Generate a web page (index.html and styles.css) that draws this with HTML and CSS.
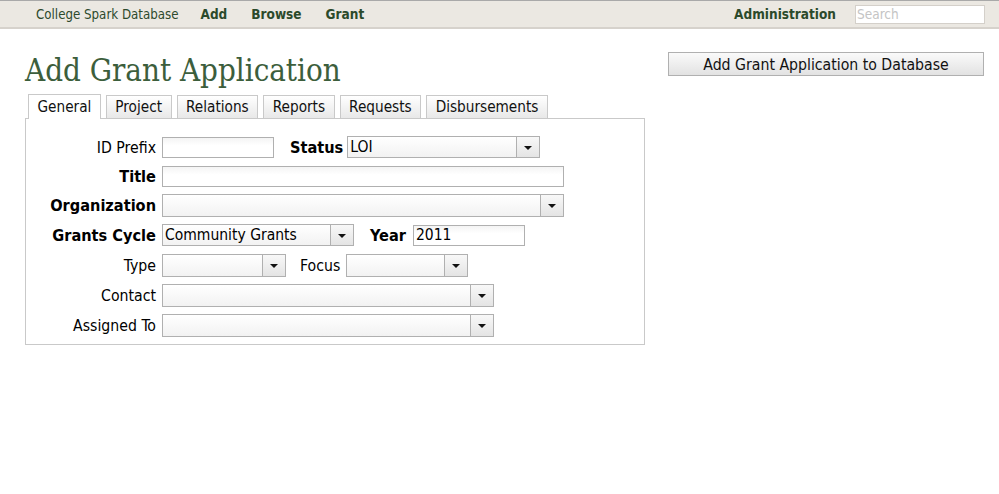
FILE: index.html
```html
<!DOCTYPE html>
<html>
<head>
<meta charset="utf-8">
<link rel="stylesheet" href="styles.css">
</head>
<body>
<div class="topbar">
  <div class="nav-left">
    <span class="brand">College Spark Database</span>
    <a class="nav-link">Add</a>
    <a class="nav-link">Browse</a>
    <a class="nav-link">Grant</a>
  </div>
  <div class="nav-right">
    <a class="nav-link">Administration</a>
    <input class="search" type="text" placeholder="Search">
  </div>
</div>
<div class="main">
  <div class="content">
    <h1 class="title">Add Grant Application</h1>
    <div class="tabs">
      <div class="tab active">General</div>
      <div class="tab">Project</div>
      <div class="tab">Relations</div>
      <div class="tab">Reports</div>
      <div class="tab">Requests</div>
      <div class="tab">Disbursements</div>
    </div>
    <div class="panel">
      <div class="row r1">
        <label class="lbl">ID Prefix</label>
        <div class="input w-idp"></div>
        <label class="lbl2 b s-status">Status</label>
        <div class="select w-status"><span class="val">LOI</span><span class="arrow"></span></div>
      </div>
      <div class="row r2">
        <label class="lbl b">Title</label>
        <div class="input w-title"></div>
      </div>
      <div class="row r3">
        <label class="lbl b">Organization</label>
        <div class="select w-org"><span class="val"></span><span class="arrow"></span></div>
      </div>
      <div class="row r4">
        <label class="lbl b">Grants Cycle</label>
        <div class="select w-cycle"><span class="val">Community Grants</span><span class="arrow"></span></div>
        <label class="lbl2 b s-year">Year</label>
        <div class="input w-year"><span class="val">2011</span></div>
      </div>
      <div class="row r5">
        <label class="lbl">Type</label>
        <div class="select w-type"><span class="val"></span><span class="arrow"></span></div>
        <label class="lbl2 s-focus">Focus</label>
        <div class="select w-focus"><span class="val"></span><span class="arrow"></span></div>
      </div>
      <div class="row r6">
        <label class="lbl">Contact</label>
        <div class="select w-contact"><span class="val"></span><span class="arrow"></span></div>
      </div>
      <div class="row r7">
        <label class="lbl">Assigned To</label>
        <div class="select w-contact"><span class="val"></span><span class="arrow"></span></div>
      </div>
    </div>
  </div>
  <div class="side">
    <button class="btn">Add Grant Application to Database</button>
  </div>
</div>
</body>
</html>
```
FILE: styles.css
```css
* { box-sizing: border-box; }
body {
  margin: 0;
  font-family: "DejaVu Sans Condensed", "DejaVu Sans", sans-serif;
  background: #fff;
  color: #000;
}
.topbar {
  height: 29px;
  background: #ebe8e2;
  border-top: 1px solid #a9a9a9;
  border-bottom: 2px solid #d6d2cc;
  display: flex;
  justify-content: space-between;
  align-items: center;
  padding: 0 14px 0 36px;
}
.nav-left, .nav-right { display: flex; align-items: center; }
.brand {
  font-size: 13.2px;
  color: #2d4a2d;
  margin-right: 22px;
}
.nav-link {
  font-size: 13.5px;
  font-weight: bold;
  color: #2b4a2b;
  margin-right: 24px;
}
.nav-right .nav-link { margin-right: 19px; }
.search {
  width: 130px;
  height: 19px;
  border: 1px solid #d4d0ca;
  background: #fff;
  font-family: "DejaVu Sans Condensed", "DejaVu Sans", sans-serif;
  font-size: 13.5px;
  padding: 0 1px;
  margin: 0;
  outline: none;
}
.search::placeholder { color: #c4c4c4; }
.main {
  display: flex;
  padding: 0 15px 0 25px;
}
.content { width: 620px; }
.side { flex: 1; display: flex; justify-content: flex-end; padding-top: 23px; }
.title {
  font-family: "DejaVu Serif Condensed", "DejaVu Serif", serif;
  font-weight: normal;
  font-size: 31px;
  color: #3c5e3c;
  margin: 21px 0 0 0;
  line-height: 40px;
  height: 40px;
}
.tabs {
  display: flex;
  align-items: flex-end;
  padding-left: 3px;
  margin-top: 4px;
  height: 24px;
}
.tab {
  font-size: 15.2px;
  height: 23px;
  line-height: 23px;
  padding: 0 8.5px;
  border: 1px solid #c9c9c9;
  border-bottom: none;
  background: linear-gradient(#ffffff, #e8e8e8);
  margin-right: 5px;
  color: #111;
}
.tab.active {
  height: 25px;
  line-height: 25px;
  background: #fff;
  position: relative;
  top: 1px;
}
.panel {
  border: 1px solid #c9c9c9;
  padding: 17px 0 7px 0;
}
.row {
  display: flex;
  align-items: center;
}
.r1 { height: 22px; margin-bottom: 8px; }
.r2 { height: 21px; margin-bottom: 7px; }
.r3 { height: 23px; margin-bottom: 7px; }
.r4 { height: 22px; margin-bottom: 8px; }
.r5 { height: 23px; margin-bottom: 7px; }
.r6 { height: 23px; margin-bottom: 7px; }
.r7 { height: 23px; }
.lbl, .lbl2 {
  font-size: 15.7px;
  white-space: nowrap;
}
.lbl {
  width: 130px;
  text-align: right;
  margin-right: 6px;
}
.b { font-weight: bold; font-size: 16.2px; }
.s-status { margin: 0 4px 0 16px; }
.s-year { margin: 0 7px 0 16px; }
.s-focus { margin: 0 6px 0 14px; }
.input, .select {
  height: 22px;
  border: 1px solid #b0b0b0;
  background: linear-gradient(#f4f4f4, #ffffff 40%);
  display: flex;
  align-items: center;
  font-size: 15.5px;
}
.select { background: linear-gradient(#ffffff, #f2f2f2); }
.val {
  flex: 1;
  padding-left: 2px;
  white-space: nowrap;
  overflow: hidden;
}
.arrow {
  width: 23px;
  height: 100%;
  border-left: 1px solid #b0b0b0;
  background: linear-gradient(#f8f8f8, #e4e4e4);
  display: flex;
  align-items: center;
  justify-content: center;
}
.arrow::after {
  content: "";
  border-left: 4px solid transparent;
  border-right: 4px solid transparent;
  border-top: 4px solid #111;
  margin-top: 1px;
}
.w-idp { width: 112px; height: 21px; }
.w-status { width: 193px; }
.w-title { width: 402px; height: 21px; }
.w-org { width: 402px; height: 23px; }
.w-cycle { width: 192px; }
.w-year { width: 112px; height: 21px; }
.w-type { width: 124px; height: 23px; }
.w-focus { width: 122px; height: 23px; }
.w-contact { width: 332px; height: 23px; }
.btn {
  width: 316px;
  height: 24px;
  border: 1px solid #b0b0b0;
  background: linear-gradient(#fafafa, #e2e2e2);
  font-family: "DejaVu Sans Condensed", "DejaVu Sans", sans-serif;
  font-size: 15.7px;
  color: #111;
  padding: 0;
}
```
